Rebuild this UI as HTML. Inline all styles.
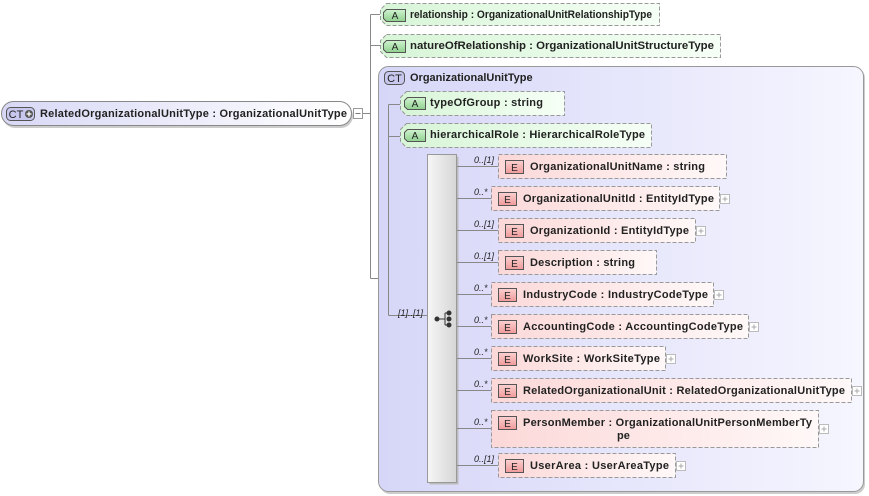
<!DOCTYPE html>
<html><head><meta charset="utf-8"><style>
html,body{margin:0;padding:0;background:#fff;width:869px;height:496px;overflow:hidden}
svg{display:block}
text{font-family:"Liberation Sans",Arial,sans-serif;font-weight:bold;font-size:11px;fill:#222}
.card{font-size:9px;font-style:italic;font-weight:normal;fill:#222}
.b{font-size:10px;font-weight:normal;text-anchor:middle}
</style></head><body>
<svg width="869" height="496" viewBox="0 0 869 496" xmlns="http://www.w3.org/2000/svg">
<defs>
<linearGradient id="gA" x1="0" y1="0" x2="1" y2="0"><stop offset="0" stop-color="#d7f5d7"/><stop offset="1" stop-color="#f6fff6"/></linearGradient>
<linearGradient id="gE" x1="0" y1="0" x2="1" y2="0"><stop offset="0" stop-color="#fcd8d8"/><stop offset="1" stop-color="#fff8f8"/></linearGradient>
<linearGradient id="gR" x1="0" y1="0" x2="1" y2="0"><stop offset="0" stop-color="#d8d8f6"/><stop offset="1" stop-color="#ffffff"/></linearGradient>
<linearGradient id="gC" x1="0" y1="0" x2="1" y2="0"><stop offset="0" stop-color="#d6d6f8"/><stop offset="1" stop-color="#f6f6ff"/></linearGradient>
<linearGradient id="gS" x1="0" y1="0" x2="1" y2="0"><stop offset="0" stop-color="#f6f6f6"/><stop offset="1" stop-color="#d6d6d6"/></linearGradient>
<linearGradient id="gEb" x1="0" y1="0" x2="0" y2="1"><stop offset="0" stop-color="#fbd0d0"/><stop offset="1" stop-color="#f09a9a"/></linearGradient>
<linearGradient id="gAb" x1="0" y1="0" x2="0" y2="1"><stop offset="0" stop-color="#d0f4d0"/><stop offset="1" stop-color="#8fd08f"/></linearGradient>
</defs>
<g stroke="#888" stroke-width="1" fill="none">
<path d="M362.5 113.5H370.5M370.5 14.5V278.5M370.5 14.5H380M370.5 45.5H380M370.5 278.5H380"/>
</g>
<!-- root -->
<rect x="3" y="104" width="350" height="24" rx="12" fill="#ccc"/>
<rect x="1.5" y="101.5" width="350" height="24" rx="12" fill="url(#gR)" stroke="#888"/>
<rect x="6.5" y="107.5" width="28" height="13" rx="4" fill="#c8c8ee" stroke="#555"/>
<text x="16" y="118" class="b" style="font-size:11px">CT</text>
<circle cx="29" cy="114" r="4" fill="#555"/><path d="M26.5 114h5M29 111.5v5" stroke="#fff" stroke-width="1.3"/>
<text x="40" y="117" textLength="307" lengthAdjust="spacing">RelatedOrganizationalUnitType : OrganizationalUnitType</text>
<rect x="353.5" y="108.5" width="9" height="10" fill="#fff" stroke="#999"/><path d="M355.5 113.5h5" stroke="#777"/>
<!-- attributes -->
<g>
<path d="M386.5 3.5H659.5V25.5H386.5L380.5 19.5V9.5Z" fill="url(#gA)" stroke="#999" stroke-dasharray="4,2"/>
<path d="M386.5 9.5H405.5V21.5H386.5L383.5 18.5V12.5Z" fill="url(#gAb)" stroke="#555"/>
<text x="395" y="19" class="b">A</text>
<text x="410" y="18" textLength="242" lengthAdjust="spacingAndGlyphs">relationship : OrganizationalUnitRelationshipType</text>
<path d="M386.5 34.5H720.5V57.5H386.5L380.5 51.5V40.5Z" fill="url(#gA)" stroke="#999" stroke-dasharray="4,2"/>
<path d="M386.5 40.5H405.5V52.5H386.5L383.5 49.5V43.5Z" fill="url(#gAb)" stroke="#555"/>
<text x="395" y="50" class="b">A</text>
<text x="410" y="49" textLength="304" lengthAdjust="spacingAndGlyphs">natureOfRelationship : OrganizationalUnitStructureType</text>
</g>
<!-- CT group -->
<rect x="380" y="68" width="485" height="426" rx="10" fill="#ccc"/>
<rect x="378.5" y="66.5" width="485" height="425" rx="10" fill="url(#gC)" stroke="#999"/>
<rect x="384.5" y="71.5" width="20" height="13" rx="4" fill="#c8c8ee" stroke="#555"/>
<text x="394.5" y="82" class="b" style="font-size:11px">CT</text>
<text x="410" y="81">OrganizationalUnitType</text>
<path d="M388.5 104.5V315.5M388.5 104.5H400M388.5 136.5H400M388.5 315.5H428" stroke="#888" fill="none"/>
<text x="398" y="316" class="card">[1]..[1]</text>
<path d="M406.5 91.5H564.5V115.5H406.5L400.5 109.5V97.5Z" fill="url(#gA)" stroke="#999" stroke-dasharray="4,2"/>
<path d="M407.5 97.5H425.5V109.5H407.5L404.5 106.5V100.5Z" fill="url(#gAb)" stroke="#555"/>
<text x="415" y="107" class="b">A</text>
<text x="430" y="106" textLength="113" lengthAdjust="spacing">typeOfGroup : string</text>
<path d="M406.5 123.5H651.5V147.5H406.5L400.5 141.5V129.5Z" fill="url(#gA)" stroke="#999" stroke-dasharray="4,2"/>
<path d="M407.5 129.5H425.5V141.5H407.5L404.5 138.5V132.5Z" fill="url(#gAb)" stroke="#555"/>
<text x="415" y="139" class="b">A</text>
<text x="430" y="138" textLength="215" lengthAdjust="spacing">hierarchicalRole : HierarchicalRoleType</text>
<!-- sequence -->
<rect x="429.5" y="156.5" width="29" height="328" fill="#bbb"/>
<rect x="427.5" y="154.5" width="29" height="328" fill="url(#gS)" stroke="#999"/>
<g fill="#333" stroke="#333"><circle cx="437" cy="319" r="2"/><circle cx="449" cy="313" r="2"/><circle cx="449" cy="319" r="2"/><circle cx="449" cy="325" r="2"/>
<path d="M437 319h8M445 313v12M445 313h4M445 325h4" fill="none"/></g>
<g stroke="#888" fill="none">
<path d="M457 166.5H498M457 198.5H491M457 230.5H498M457 262.5H498M457 294.5H491M457 326.5H491M457 358.5H491M457 390.5H491M457 428.5H491M457 465.5H498"/>
</g>
<g>
<text x="474" y="163" class="card">0..[1]</text>
<rect x="498.5" y="154.5" width="228" height="24" fill="url(#gE)" stroke="#999" stroke-dasharray="4,2"/>
<rect x="505.5" y="160.5" width="18" height="13" fill="url(#gEb)" stroke="#555"/><text x="514.5" y="171" class="b">E</text>
<text x="530" y="170" textLength="175" lengthAdjust="spacing">OrganizationalUnitName : string</text>

<text x="474" y="195" class="card">0..*</text>
<rect x="491.5" y="186.5" width="228" height="24" fill="url(#gE)" stroke="#999" stroke-dasharray="4,2"/>
<rect x="498.5" y="192.5" width="18" height="13" fill="url(#gEb)" stroke="#555"/><text x="507.5" y="203" class="b">E</text>
<text x="523" y="202" textLength="191" lengthAdjust="spacing">OrganizationalUnitId : EntityIdType</text>
<rect x="720.5" y="194.5" width="9" height="9" fill="#fff" stroke="#bbb"/><path d="M722.5 199h5M725 196.5v5" stroke="#aaa"/>

<text x="474" y="227" class="card">0..[1]</text>
<rect x="498.5" y="218.5" width="197" height="24" fill="url(#gE)" stroke="#999" stroke-dasharray="4,2"/>
<rect x="505.5" y="224.5" width="18" height="13" fill="url(#gEb)" stroke="#555"/><text x="514.5" y="235" class="b">E</text>
<text x="530" y="234" textLength="159" lengthAdjust="spacing">OrganizationId : EntityIdType</text>
<rect x="696.5" y="226.5" width="9" height="9" fill="#fff" stroke="#bbb"/><path d="M698.5 231h5M701 228.5v5" stroke="#aaa"/>

<text x="474" y="259" class="card">0..[1]</text>
<rect x="498.5" y="250.5" width="158" height="24" fill="url(#gE)" stroke="#999" stroke-dasharray="4,2"/>
<rect x="505.5" y="256.5" width="18" height="13" fill="url(#gEb)" stroke="#555"/><text x="514.5" y="267" class="b">E</text>
<text x="530" y="266" textLength="105" lengthAdjust="spacing">Description : string</text>

<text x="474" y="291" class="card">0..*</text>
<rect x="491.5" y="282.5" width="222" height="24" fill="url(#gE)" stroke="#999" stroke-dasharray="4,2"/>
<rect x="498.5" y="288.5" width="18" height="13" fill="url(#gEb)" stroke="#555"/><text x="507.5" y="299" class="b">E</text>
<text x="523" y="298" textLength="185" lengthAdjust="spacing">IndustryCode : IndustryCodeType</text>
<rect x="714.5" y="290.5" width="9" height="9" fill="#fff" stroke="#bbb"/><path d="M716.5 295h5M719 292.5v5" stroke="#aaa"/>

<text x="474" y="323" class="card">0..*</text>
<rect x="491.5" y="314.5" width="257" height="24" fill="url(#gE)" stroke="#999" stroke-dasharray="4,2"/>
<rect x="498.5" y="320.5" width="18" height="13" fill="url(#gEb)" stroke="#555"/><text x="507.5" y="331" class="b">E</text>
<text x="523" y="330" textLength="220" lengthAdjust="spacing">AccountingCode : AccountingCodeType</text>
<rect x="749.5" y="322.5" width="9" height="9" fill="#fff" stroke="#bbb"/><path d="M751.5 327h5M754 324.5v5" stroke="#aaa"/>

<text x="474" y="355" class="card">0..*</text>
<rect x="491.5" y="346.5" width="174" height="24" fill="url(#gE)" stroke="#999" stroke-dasharray="4,2"/>
<rect x="498.5" y="352.5" width="18" height="13" fill="url(#gEb)" stroke="#555"/><text x="507.5" y="363" class="b">E</text>
<text x="523" y="362" textLength="137" lengthAdjust="spacing">WorkSite : WorkSiteType</text>
<rect x="666.5" y="354.5" width="9" height="9" fill="#fff" stroke="#bbb"/><path d="M668.5 359h5M671 356.5v5" stroke="#aaa"/>

<text x="474" y="387" class="card">0..*</text>
<rect x="491.5" y="378.5" width="360" height="24" fill="url(#gE)" stroke="#999" stroke-dasharray="4,2"/>
<rect x="498.5" y="384.5" width="18" height="13" fill="url(#gEb)" stroke="#555"/><text x="507.5" y="395" class="b">E</text>
<text x="523" y="394" textLength="322" lengthAdjust="spacing">RelatedOrganizationalUnit : RelatedOrganizationalUnitType</text>
<rect x="852.5" y="386.5" width="9" height="9" fill="#fff" stroke="#bbb"/><path d="M854.5 391h5M857 388.5v5" stroke="#aaa"/>

<text x="474" y="425" class="card">0..*</text>
<rect x="491.5" y="410.5" width="327" height="37" fill="url(#gE)" stroke="#999" stroke-dasharray="4,2"/>
<rect x="498.5" y="416.5" width="18" height="13" fill="url(#gEb)" stroke="#555"/><text x="507.5" y="427" class="b">E</text>
<text x="523" y="426" textLength="289" lengthAdjust="spacing">PersonMember : OrganizationalUnitPersonMemberTy</text>
<text x="617" y="439">pe</text>
<rect x="819.5" y="424.5" width="9" height="9" fill="#fff" stroke="#bbb"/><path d="M821.5 429h5M824 426.5v5" stroke="#aaa"/>

<text x="474" y="462" class="card">0..[1]</text>
<rect x="498.5" y="453.5" width="177" height="24" fill="url(#gE)" stroke="#999" stroke-dasharray="4,2"/>
<rect x="505.5" y="459.5" width="18" height="13" fill="url(#gEb)" stroke="#555"/><text x="514.5" y="470" class="b">E</text>
<text x="530" y="469" textLength="139" lengthAdjust="spacing">UserArea : UserAreaType</text>
<rect x="676.5" y="461.5" width="9" height="9" fill="#fff" stroke="#bbb"/><path d="M678.5 466h5M681 463.5v5" stroke="#aaa"/>
</g>
</svg>
</body></html>
